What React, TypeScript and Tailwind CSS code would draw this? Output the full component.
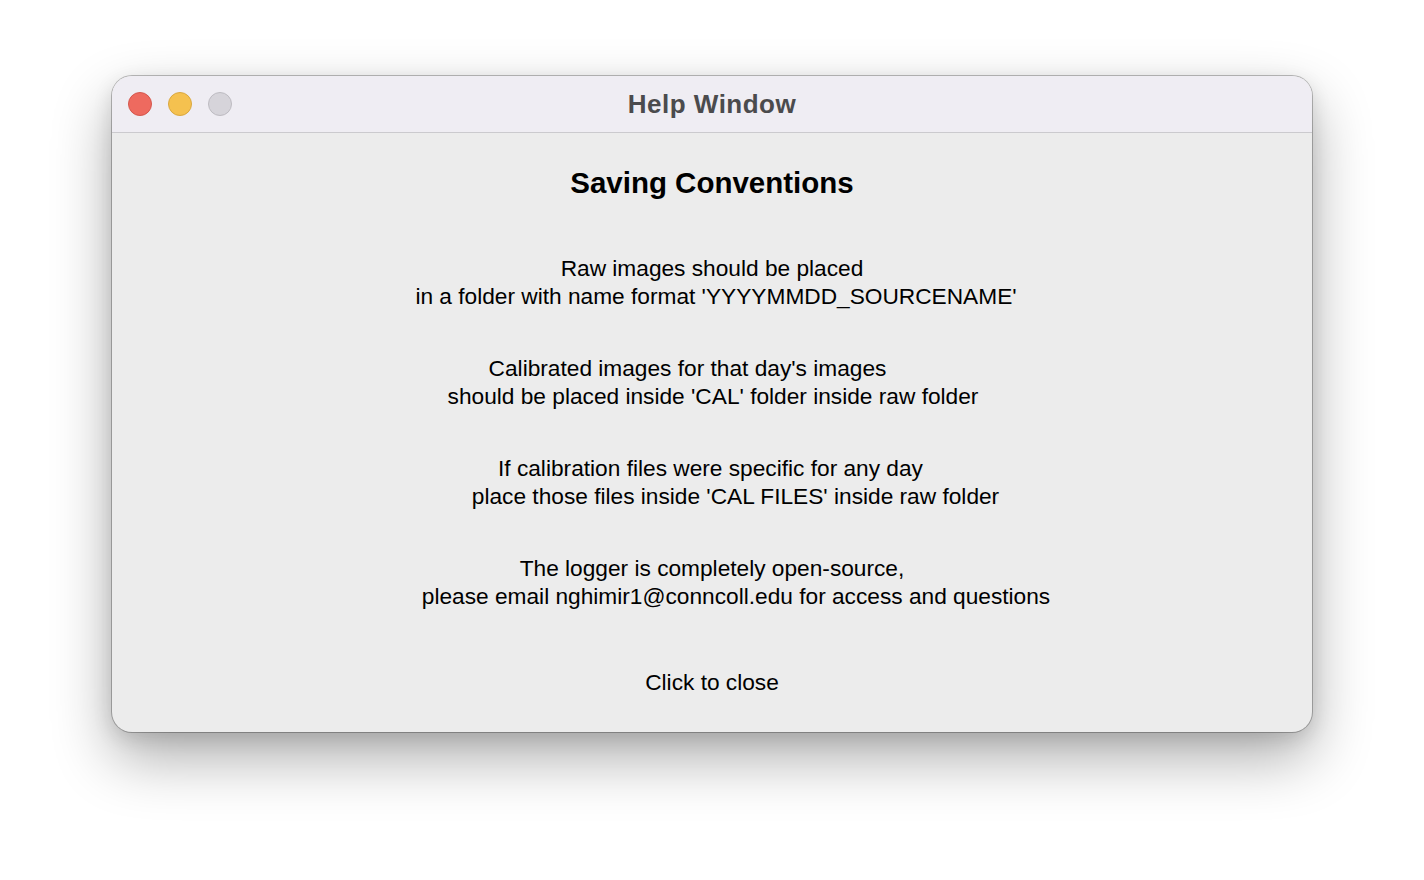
import React from 'react'

const blocks: { text: string; pl?: string; pr?: string }[][] = [
    [{ text: 'Raw images should be placed' }, { text: "in a folder with name format 'YYYYMMDD_SOURCENAME'", pl: 'pl-[8px]' }],
    [
        { text: "Calibrated images for that day's images", pr: 'pr-[49px]' },
        { text: "should be placed inside 'CAL' folder inside raw folder", pl: 'pl-[2px]' },
    ],
    [
        { text: 'If calibration files were specific for any day', pr: 'pr-[3px]' },
        { text: "place those files inside 'CAL FILES' inside raw folder", pl: 'pl-[47px]' },
    ],
    [
        { text: 'The logger is completely open-source,' },
        { text: 'please email nghimir1@conncoll.edu for access and questions', pl: 'pl-[48px]' },
    ],
]

export default function App() {
    return (
        <div className="w-[1424px] h-[880px] bg-white flex justify-center pt-[76px] font-['Liberation_Sans',Arial,sans-serif]">
            {/* Window */}
            <div className="w-[1200px] h-[656px] rounded-[20px] overflow-hidden bg-[#ececec] flex flex-col shadow-[0_0_0_1px_rgba(0,0,0,0.25),0_26px_60px_rgba(0,0,0,0.32),0_6px_20px_rgba(0,0,0,0.12)]">
                {/* Title bar */}
                <div className="relative h-[57px] shrink-0 bg-[#efedf3] border-b border-[#cbcace] flex items-center px-[16px] gap-[16px]">
                    <span className="w-[24px] h-[24px] rounded-full bg-[#ee6a5f] border border-[#d4574d]" />
                    <span className="w-[24px] h-[24px] rounded-full bg-[#f5c14f] border border-[#d9a73f]" />
                    <span className="w-[24px] h-[24px] rounded-full bg-[#d6d4da] border border-[#bdbbc1]" />
                    <div className="absolute inset-0 flex items-center justify-center text-[26px] font-bold text-[#4b4b4d] tracking-[0.5px]">
                        Help Window
                    </div>
                </div>

                {/* Body */}
                <div className="flex flex-col items-center text-black pt-[32px]">
                    <h1 className="text-[29.5px] leading-[36px] font-bold">Saving Conventions</h1>
                    <div className="mt-[53px] flex flex-col items-center gap-[44px]">
                        {blocks.map((lines, i) => (
                            <div key={i} className="flex flex-col items-center">
                                {lines.map((l, j) => (
                                    <div
                                        key={j}
                                        className={`text-[22.7px] leading-[28px] whitespace-pre ${l.pl ?? ''} ${l.pr ?? ''}`}
                                    >
                                        {l.text}
                                    </div>
                                ))}
                            </div>
                        ))}
                    </div>
                    <button className="mt-[58px] text-[22.7px] leading-[28px]">Click to close</button>
                </div>
            </div>
        </div>
    )
}
